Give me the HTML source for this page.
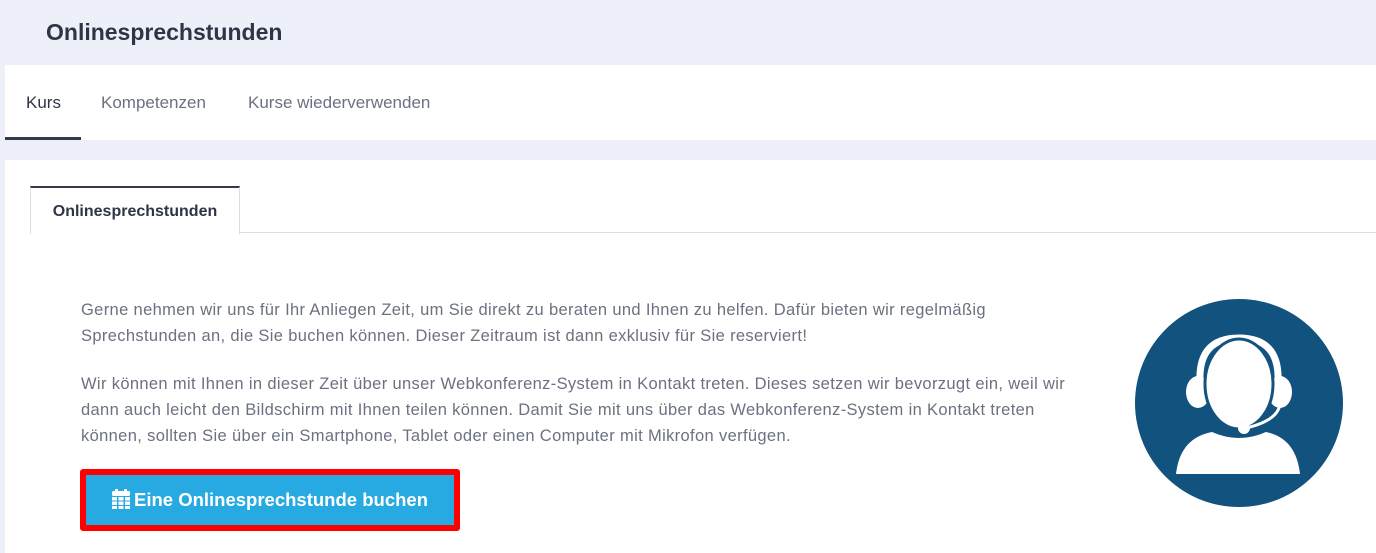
<!DOCTYPE html>
<html><head><style>
body{margin:0;width:1376px;height:553px;background:#edf0f8;font-family:"Liberation Sans",sans-serif;overflow:hidden;position:relative}
.h1{position:absolute;left:46px;top:19px;font-size:23px;font-weight:bold;color:#2f3545}
.bar{position:absolute;left:5px;top:65px;width:1371px;height:75px;background:#fff}
.bar span{position:absolute;top:28px;font-size:17px;color:#6b7180}
.ul{position:absolute;left:0;top:72px;width:76px;height:3px;background:#343a4a}
.main{position:absolute;left:5px;top:160px;width:1371px;height:393px;background:#fff}
.tab{position:absolute;left:25px;top:26px;width:208px;height:46px;border-top:2px solid #343a4a;border-left:1px solid #ddd;border-right:1px solid #ddd;background:#fff;font-size:16px;font-weight:bold;color:#2f3545;text-align:center;line-height:48px}
.line{position:absolute;left:234px;top:72px;right:0;height:1px;background:#ddd}
p{position:absolute;left:76px;margin:0;font-size:16.5px;letter-spacing:0.35px;line-height:26px;color:#6b7180;width:1000px}
.btn{position:absolute;left:75px;top:309px;width:368px;height:50px;border:6px solid #f00;border-radius:3px;background:#27aae1;color:#fff;font-size:18.5px;font-weight:bold;text-align:center;line-height:50px}
</style></head><body>
<div class="h1">Onlinesprechstunden</div>
<div class="bar"><span style="left:21px;color:#2f3545">Kurs</span><span style="left:96px">Kompetenzen</span><span style="left:243px">Kurse wiederverwenden</span><div class="ul"></div></div>
<div class="main">
<div class="line"></div>
<div class="tab">Onlinesprechstunden</div>
<p style="top:137px">Gerne nehmen wir uns für Ihr Anliegen Zeit, um Sie direkt zu beraten und Ihnen zu helfen. Dafür bieten wir regelmäßig<br>Sprechstunden an, die Sie buchen können. Dieser Zeitraum ist dann exklusiv für Sie reserviert!</p>
<p style="top:211px">Wir können mit Ihnen in dieser Zeit über unser Webkonferenz-System in Kontakt treten. Dieses setzen wir bevorzugt ein, weil wir<br>dann auch leicht den Bildschirm mit Ihnen teilen können. Damit Sie mit uns über das Webkonferenz-System in Kontakt treten<br>können, sollten Sie über ein Smartphone, Tablet oder einen Computer mit Mikrofon verfügen.</p>
<div class="btn"><svg width="18" height="20" viewBox="0 0 18 20" style="vertical-align:-3px;margin-right:4px"><rect x="3" y="0" width="3" height="4" fill="#fff"/><rect x="12" y="0" width="3" height="4" fill="#fff"/><rect x="0" y="2" width="18" height="5" rx="1.5" fill="#fff"/><g fill="#fff"><rect x="0" y="8" width="5" height="3.5"/><rect x="6.5" y="8" width="5" height="3.5"/><rect x="13" y="8" width="5" height="3.5"/><rect x="0" y="12.5" width="5" height="3.5"/><rect x="6.5" y="12.5" width="5" height="3.5"/><rect x="13" y="12.5" width="5" height="3.5"/><rect x="0" y="17" width="5" height="3"/><rect x="6.5" y="17" width="5" height="3"/><rect x="13" y="17" width="5" height="3"/></g></svg>Eine Onlinesprechstunde buchen</div>
</div>
<svg style="position:absolute;left:1134px;top:298px" width="210" height="210" viewBox="0 0 210 210">
<circle cx="105" cy="105" r="104" fill="#12527e"/>
<path d="M66 84 Q64 40 105 40 Q146 40 144 84" fill="none" stroke="#fff" stroke-width="7"/>
<ellipse cx="64" cy="94" rx="12" ry="16" fill="#fff"/>
<ellipse cx="146" cy="94" rx="12" ry="16" fill="#fff"/>
<ellipse cx="105" cy="86" rx="34" ry="45" fill="#fff" stroke="#12527e" stroke-width="3"/>
<path d="M146 104 Q146 122 112 130" fill="none" stroke="#fff" stroke-width="3"/>
<circle cx="110" cy="130" r="6" fill="#fff"/>
<path d="M42 176 Q46 140 78 134 Q105 146 132 134 Q162 140 166 176 Z" fill="#fff"/>
</svg>
</body></html>
